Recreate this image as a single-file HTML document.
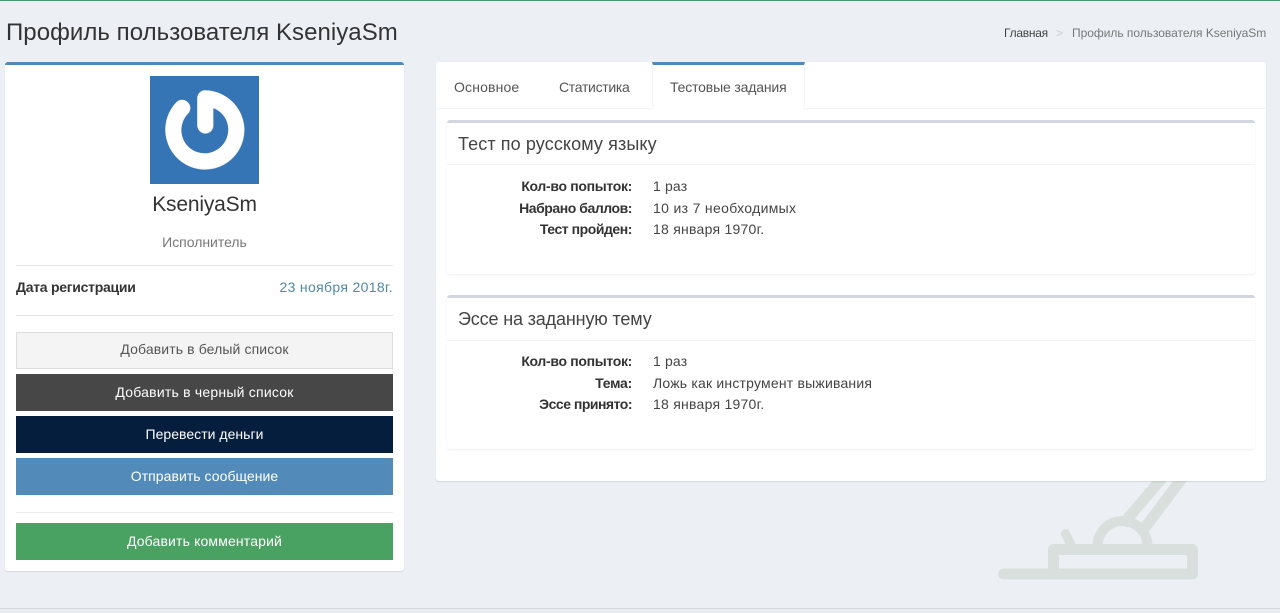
<!DOCTYPE html>
<html lang="ru">
<head>
<meta charset="utf-8">
<title>Профиль пользователя KseniyaSm</title>
<style>
html,body{margin:0;padding:0}
body{width:1280px;height:613px;overflow:hidden;position:relative;background:#ecf0f5;font-family:"Liberation Sans","Noto Sans CJK SC",sans-serif;color:#333}
.a,.t{position:absolute;box-sizing:border-box}
.t{white-space:nowrap;line-height:20px;height:20px}
.box{background:#fff;box-shadow:0 1px 1px rgba(0,0,0,.1);border-radius:3px}
.sub{background:#fff;box-shadow:0 1px 2px rgba(0,0,0,.07);border-radius:3px}
.hr{position:absolute;left:16px;width:377px;height:1px;background:#e3e3e3}
.btn{position:absolute;box-sizing:border-box;left:16px;width:377px;height:37px;line-height:36px;text-align:center;font-size:14px;color:#fff}
.lbl{left:447px;width:185px;text-align:right;font-weight:bold;font-size:14px;color:#333}
.val{left:653px;font-size:14px;color:#444}
.h{left:458px;font-size:18px;color:#444}
.tab{font-size:14px;color:#555}
</style>
</head>
<body>
<div class="a" style="left:0;top:0;width:1280px;height:1px;background:#4a9a6a"></div>
<div class="a" style="left:0;top:608px;width:1280px;height:5px;background:#e9edf1;border-top:1px solid #d6d9dd"></div>

<svg class="a" style="left:0;top:0" width="1280" height="613" viewBox="0 0 1280 613" fill="none">
  <g stroke="#d8dfdd" stroke-width="11" stroke-linecap="round">
    <path d="M1003.500 574H1192.500V549.500H1053.500V574" stroke-linejoin="round"/>
    <path d="M1065.500 533.500L1071 545" stroke-width="9"/>
    <path d="M1097.500 546A25 25 0 0 1 1147.500 546" stroke-linecap="butt" stroke-width="10"/>
    <path d="M1123 524L1163 477M1141 533L1183 477" stroke-linecap="butt" stroke-width="11"/>
  </g>
</svg>

<div class="t" style="left:6px;top:21px;height:24px;line-height:24px;font-size:24px;letter-spacing:.05px;color:#333">Профиль пользователя KseniyaSm</div>
<div class="t" style="left:1004px;top:23px;font-size:12px;letter-spacing:-.25px;color:#444">Главная</div>
<div class="t" style="left:1056px;top:23px;font-size:12px;color:#ccc">&gt;</div>
<div class="t" style="left:1072px;top:23px;font-size:12px;letter-spacing:-.03px;color:#777">Профиль пользователя KseniyaSm</div>

<!-- left panel -->
<div class="a box" style="left:5px;top:62px;width:399px;height:509px;border-top:3px solid #4f8aba"></div>
<svg class="a" style="left:150px;top:76px" width="109" height="108" viewBox="150 76 109 108" fill="none">
  <rect x="150" y="76" width="109" height="108" fill="#3675b5"/>
  <path d="M182 107.500A31.500 31.500 0 1 0 205 98V125" stroke="#eceff2" stroke-width="16" stroke-linecap="round" stroke-linejoin="round" transform="translate(.4 .6)"/>
  <path d="M182 107.500A31.500 31.500 0 1 0 205 98V125" stroke="#fff" stroke-width="15.500" stroke-linecap="round" stroke-linejoin="round"/>
</svg>
<div class="t" style="left:5px;width:399px;top:193px;height:24px;line-height:24px;text-align:center;font-size:21px;letter-spacing:-.18px;color:#333">KseniyaSm</div>
<div class="t" style="left:5px;width:399px;top:232px;text-align:center;font-size:14px;letter-spacing:-.02px;color:#777">Исполнитель</div>
<div class="hr" style="top:265px"></div>
<div class="t" style="left:16px;top:277px;font-size:14px;font-weight:bold;letter-spacing:-.27px;color:#333">Дата регистрации</div>
<div class="t" style="right:887px;top:277px;font-size:14px;letter-spacing:.34px;color:#4f8aa8">23 ноября 2018г.</div>
<div class="hr" style="top:315px"></div>
<div class="btn" style="top:332px;background:#f4f4f4;border:1px solid #ddd;line-height:33px;letter-spacing:.11px;color:#555">Добавить в белый список</div>
<div class="btn" style="top:374px;background:#474747;letter-spacing:.22px">Добавить в черный список</div>
<div class="btn" style="top:416px;background:#061e3e;letter-spacing:.03px">Перевести деньги</div>
<div class="btn" style="top:458px;background:#528bb9;letter-spacing:.05px">Отправить сообщение</div>
<div class="hr" style="top:512px;background:#ecebec"></div>
<div class="btn" style="top:523px;background:#4aa262;letter-spacing:.15px">Добавить комментарий</div>

<!-- right panel -->
<div class="a box" style="left:436px;top:62px;width:830px;height:419px"></div>
<div class="a" style="left:436px;top:108px;width:830px;height:1px;background:#f4f4f4"></div>
<div class="a" style="left:652px;top:62px;width:153px;height:47px;background:#fff;border-top:3px solid #4f8aba;border-left:1px solid #f4f4f4;border-right:1px solid #f4f4f4"></div>
<div class="t tab" style="left:454px;top:77px;letter-spacing:.15px">Основное</div>
<div class="t tab" style="left:559px;top:77px;letter-spacing:-.3px">Статистика</div>
<div class="t tab" style="left:670px;top:77px;letter-spacing:-.16px">Тестовые задания</div>

<div class="a sub" style="left:447px;top:120px;width:808px;height:154px;border-top:3px solid #d2d6de"></div>
<div class="a" style="left:447px;top:164px;width:808px;height:1px;background:#f4f4f4"></div>
<div class="t h" style="top:134px;letter-spacing:.11px">Тест по русскому языку</div>
<div class="t lbl" style="top:176px;letter-spacing:-.32px">Кол-во попыток:</div><div class="t val" style="top:176px;letter-spacing:.15px">1 раз</div>
<div class="t lbl" style="top:198px;letter-spacing:-.45px">Набрано баллов:</div><div class="t val" style="top:198px;letter-spacing:.33px">10 из 7 необходимых</div>
<div class="t lbl" style="top:219px;letter-spacing:-.45px">Тест пройден:</div><div class="t val" style="top:219px;letter-spacing:.25px">18 января 1970г.</div>

<div class="a sub" style="left:447px;top:295px;width:808px;height:154px;border-top:3px solid #d2d6de"></div>
<div class="a" style="left:447px;top:340px;width:808px;height:1px;background:#f4f4f4"></div>
<div class="t h" style="top:309px;letter-spacing:-.15px">Эссе на заданную тему</div>
<div class="t lbl" style="top:351px;letter-spacing:-.32px">Кол-во попыток:</div><div class="t val" style="top:351px;letter-spacing:.15px">1 раз</div>
<div class="t lbl" style="top:373px;letter-spacing:-.25px">Тема:</div><div class="t val" style="top:373px;letter-spacing:.2px">Ложь как инструмент выживания</div>
<div class="t lbl" style="top:394px;letter-spacing:-.5px">Эссе принято:</div><div class="t val" style="top:394px;letter-spacing:.25px">18 января 1970г.</div>
</body>
</html>
